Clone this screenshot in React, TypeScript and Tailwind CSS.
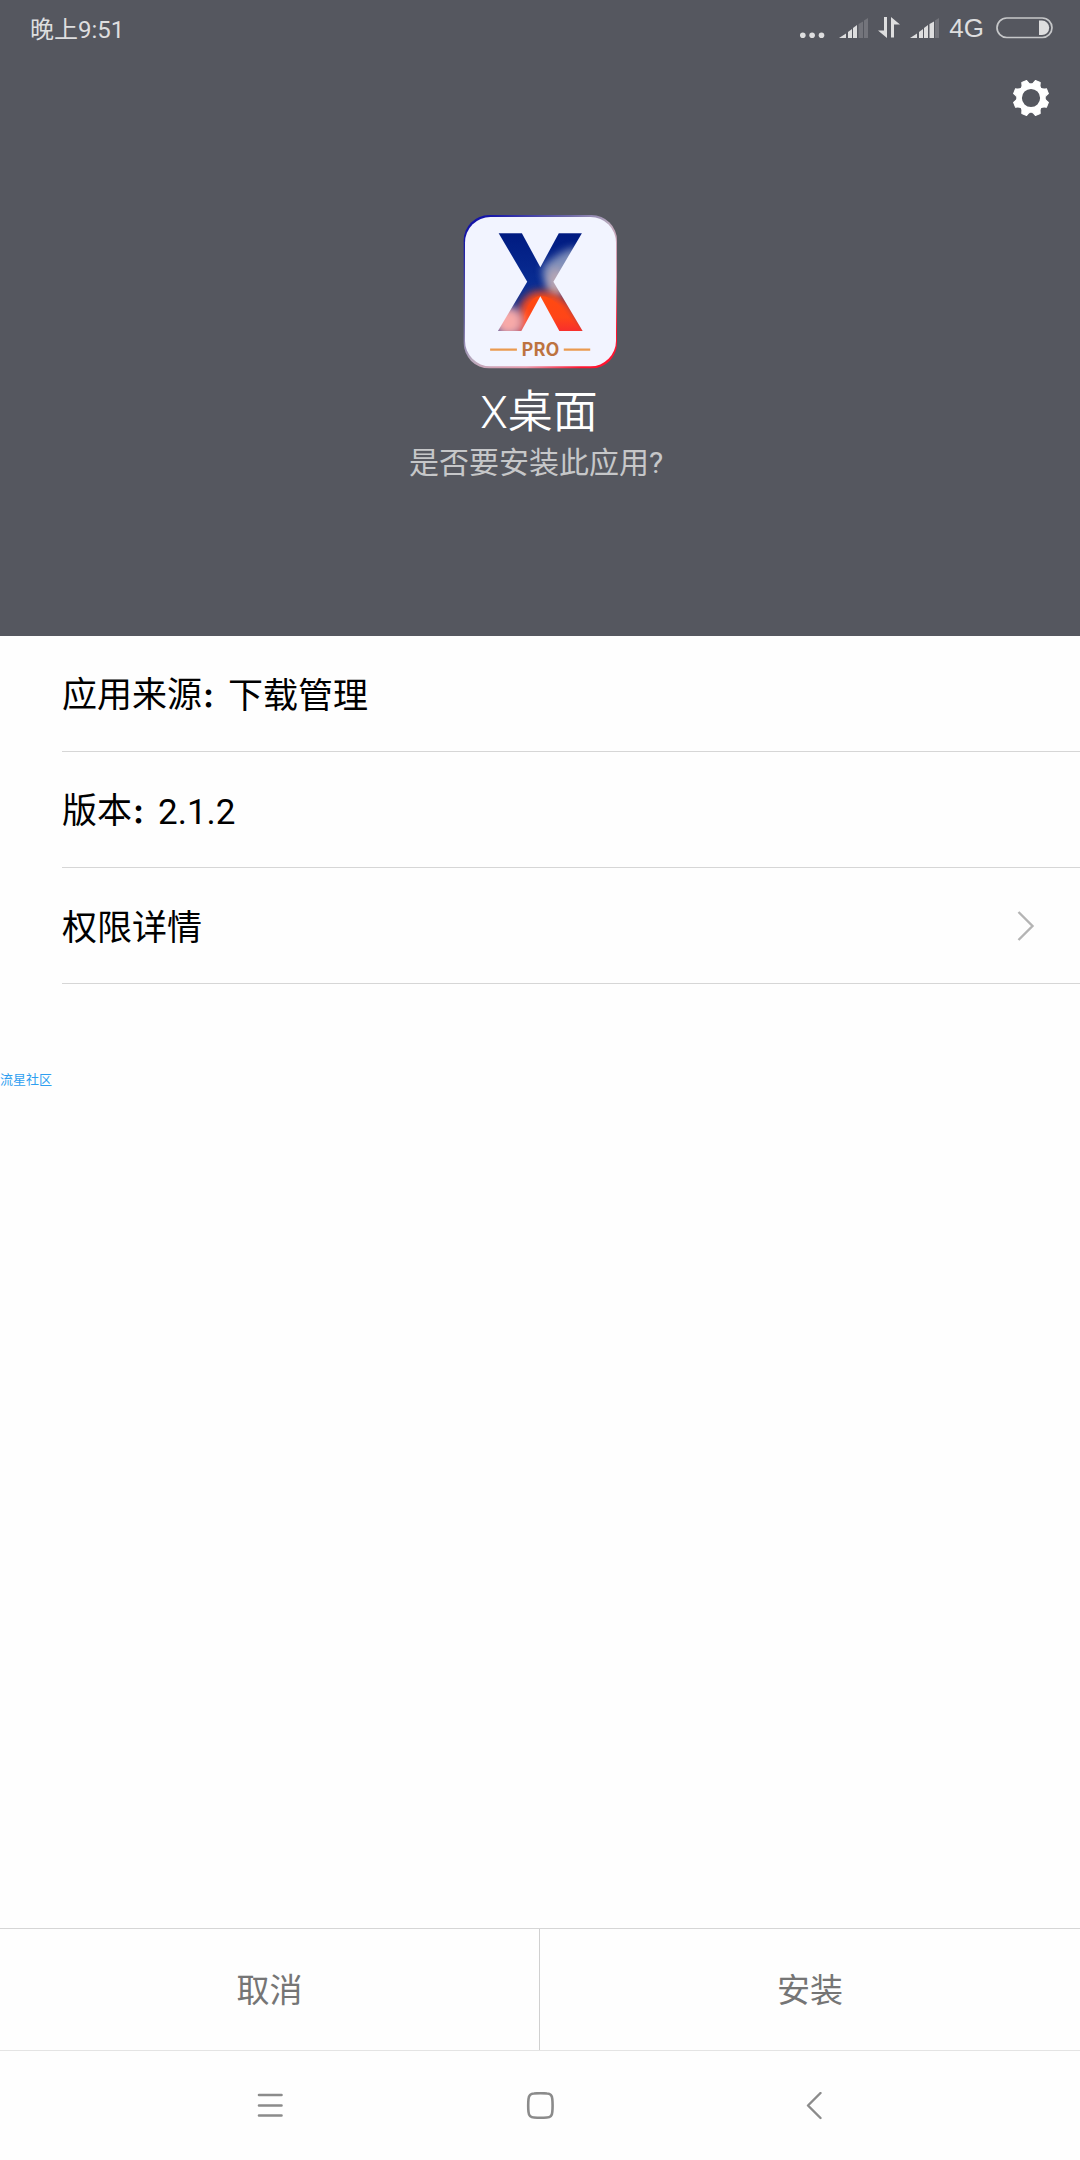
import React from "react";

interface InfoItem {
  id: number;
  label: string;
  value: string;
}

const infoItems: InfoItem[] = [
  { id: 1, label: "应用来源", value: "下载管理" },
  { id: 2, label: "版本", value: "2.1.2" },
];

const toothAngles = [22.5, 67.5, 112.5, 157.5, 202.5, 247.5, 292.5, 337.5];

const SignalIcon: React.FC<{ level: number }> = ({ level }) => {
  const bars = [
    "M0 20 L7 15.5 V20 Z",
    "M9 14 L13 11 V20 H9 Z",
    "M14 10 L18 7 V20 H14 Z",
    "M19.5 6 L24 3.5 V20 H19.5 Z",
    "M25 2.5 L29 0 V20 H25 Z",
  ];
  return (
    <svg className="h-5 w-[29px]" viewBox="0 0 29 20" fill="#dededf" aria-hidden="true">
      {bars.map((d, index) => (
        <path key={d} d={d} opacity={index < level ? 1 : 0.22} />
      ))}
    </svg>
  );
};

const StatusBar: React.FC = () => (
  <div className="flex h-[58px] items-center justify-between pl-[30px] pr-[27px] text-[#dededf]">
    <span className="pt-0.5 text-2xl">晚上9:51</span>
    <div className="flex h-full items-center pb-0.5">
      <svg className="mr-3.5 h-5 w-[26px]" viewBox="0 0 26 20" fill="currentColor" aria-hidden="true">
        <circle cx="3.8" cy="17.2" r="2.8" />
        <circle cx="13.1" cy="17.2" r="2.8" />
        <circle cx="22.5" cy="17.2" r="2.8" />
      </svg>
      <SignalIcon level={3} />
      <svg className="ml-2.5 mr-2.5 h-[22px] w-[22px]" viewBox="0 0 22 22" fill="currentColor" aria-hidden="true">
        <path d="M6 0 H9 V21 L0 13.5 H6 Z" />
        <path d="M13 0 L22 7.5 H16 V20.5 H13 Z" />
      </svg>
      <SignalIcon level={4} />
      <span className="ml-2.5 mr-3 font-['Liberation_Sans',sans-serif] text-[26px] leading-8">4G</span>
      <svg className="h-[22px] w-[57px]" viewBox="0 0 57 22" aria-hidden="true">
        <rect x="1" y="1" width="55" height="19.5" rx="9.75" fill="none" stroke="#c6c7c9" strokeWidth="1.7" />
        <path d="M43 3.6 H46 A7.2 7.2 0 0 1 46 18 H43 Z" fill="#dededf" />
      </svg>
    </div>
  </div>
);

const GearIcon: React.FC = () => (
  <svg className="h-[38px] w-[38px]" viewBox="-19 -19 38 38" aria-hidden="true">
    <circle r="11.7" fill="none" stroke="#fff" strokeWidth="5.2" />
    {toothAngles.map((angle) => (
      <path
        key={angle}
        d="M-5.4 -12.6 Q-3.2 -14.4 -2.6 -17.8 H2.6 Q3.2 -14.4 5.4 -12.6 Z"
        transform={`rotate(${angle})`}
        fill="#fff"
        stroke="#fff"
        strokeLinejoin="round"
      />
    ))}
  </svg>
);

const AppIcon: React.FC = () => (
  <svg className="h-[154px] w-[154px]" viewBox="68 48 460 460" role="img" aria-label="X桌面 PRO">
    <defs>
      <linearGradient id="edge" x1="0" y1="0" x2="1" y2="1">
        <stop offset="0.08" stopColor="#1414a8" />
        <stop offset="0.35" stopColor="#6f6aa8" />
        <stop offset="0.5" stopColor="#b9aabd" />
        <stop offset="0.7" stopColor="#e89aac" />
        <stop offset="0.88" stopColor="#ff1430" />
      </linearGradient>
      <linearGradient id="blue" x1="0" y1="0" x2="0" y2="1">
        <stop offset="0" stopColor="#001a80" />
        <stop offset="0.6" stopColor="#0a3096" />
      </linearGradient>
      <linearGradient id="red" x1="0" y1="0" x2="0" y2="1">
        <stop offset="0" stopColor="#ff4a10" />
        <stop offset="0.5" stopColor="#ff4518" />
        <stop offset="1" stopColor="#f3203a" />
      </linearGradient>
      <filter id="soft" x="-50%" y="-50%" width="200%" height="200%">
        <feGaussianBlur stdDeviation="12" />
      </filter>
      <clipPath id="mark">
        <text x="299" y="396" textAnchor="middle" fontFamily="Roboto, sans-serif" fontWeight="700" fontSize="412">
          X
        </text>
      </clipPath>
    </defs>
    <rect x="70" y="48" width="458" height="458" rx="76" fill="url(#edge)" />
    <rect x="74" y="54" width="451" height="446" rx="76" fill="#f2f4ff" />
    <g clipPath="url(#mark)">
      <rect x="160" y="95" width="280" height="310" fill="url(#blue)" />
      <path d="M305 205 Q340 165 400 145 L420 170 L350 290 L310 240 Z" fill="#8f9cc0" opacity="0.9" filter="url(#soft)" />
      <ellipse cx="345" cy="250" rx="26" ry="44" fill="#b8a6b4" filter="url(#soft)" />
      <path d="M225 440 L240 315 Q265 276 299 276 Q350 276 385 310 L480 440 Z" fill="url(#red)" filter="url(#soft)" />
      <path d="M250 350 Q270 290 299 290 Q335 290 365 330 L440 420 H255 Z" fill="url(#red)" />
      <circle cx="205" cy="366" r="44" fill="#f7a9a8" filter="url(#soft)" />
    </g>
    <path d="M149 450 H229 M369 450 H448" stroke="#ea9a50" strokeWidth="7" />
    <text
      x="299"
      y="470"
      textAnchor="middle"
      fontFamily="'Noto Sans CJK SC', sans-serif"
      fontWeight="700"
      fontSize="54"
      fill="#bd7340"
    >
      PRO
    </text>
  </svg>
);

const NavBar: React.FC = () => (
  <nav className="grid h-[110px] grid-cols-3 border-t border-[#e4e4e4] px-[12.5%]">
    <button type="button" aria-label="菜单" className="flex items-center justify-center">
      <svg className="h-7 w-7" viewBox="0 0 28 28" stroke="#8b8b8b" strokeWidth="2.6" strokeLinecap="round" aria-hidden="true">
        <path d="M3 3 H25.5 M3 13.5 H25.5 M3 23.5 H25.5" />
      </svg>
    </button>
    <button type="button" aria-label="主屏幕" className="flex items-center justify-center">
      <svg className="h-7 w-7" viewBox="0 0 28 28" fill="none" stroke="#8b8b8b" strokeWidth="2.6" aria-hidden="true">
        <path d="M8 1.5 Q14.5 0.9 21 1.5 Q26 1.5 26.3 7 Q26.9 13.5 26.3 20 Q26 25.5 21 25.5 Q14.5 26.1 8 25.5 Q3 25.5 2.5 20 Q1.9 13.5 2.5 7 Q3 1.5 8 1.5 Z" />
      </svg>
    </button>
    <button type="button" aria-label="返回" className="flex items-center justify-center">
      <svg className="h-7 w-7" viewBox="0 0 28 28" fill="none" stroke="#8b8b8b" strokeWidth="2.4" strokeLinecap="round" strokeLinejoin="round" aria-hidden="true">
        <path d="M24.5 1 L12 13.5 L24.5 26" />
      </svg>
    </button>
  </nav>
);

const App: React.FC = () => {
  return (
    <div className="flex min-h-screen flex-col bg-[#fefefe] font-[Roboto,'Noto_Sans_CJK_SC',sans-serif]">
      <header className="bg-[#55575f] pb-[152px]">
        <StatusBar />
        <div className="flex h-20 items-center justify-end pr-[30px]">
          <button type="button" aria-label="设置">
            <GearIcon />
          </button>
        </div>
        <div className="flex flex-col items-center pt-[77px]">
          <AppIcon />
          <h1 className="mt-3.5 pr-0.5 text-[45px] font-[350] leading-[60px] text-white">X桌面</h1>
          <p className="pr-2 text-[30px] leading-10 text-[#c6c7c9]">是否要安装此应用?</p>
        </div>
        <div className="h-px" />
      </header>

      <main className="grow">
        <div className="pl-[62px] text-[35px] leading-[52px] text-black">
          <dl>
            {infoItems.map((item) => (
              <div key={item.id} className="flex h-[116px] items-center border-b border-[#d6d6d6] pt-1.5">
                <dt>
                  {item.label}
                  <span className="text-[26px] font-black">：</span>
                </dt>
                <dd>{item.value}</dd>
              </div>
            ))}
          </dl>
          <button
            type="button"
            className="flex h-[116px] w-full items-center justify-between border-b border-[#d6d6d6] pr-[45px]"
          >
            <span className="pt-1.5">权限详情</span>
            <svg className="h-8 w-[18px]" viewBox="0 0 18 32" fill="none" stroke="#b4b4b4" strokeWidth="2.4" aria-hidden="true">
              <path d="M1.5 2 L15.5 16 L1.5 30" />
            </svg>
          </button>
        </div>
        <p className="mt-[86px] text-[13px] leading-5 text-[#2f9ff0]">流星社区</p>
      </main>

      <div className="grid h-[122px] grid-cols-2 border-t border-[#d6d6d6] text-[33px] text-[#757575]">
        <button type="button" className="border-r border-[#d0d0d0] pt-0.5">
          取消
        </button>
        <button type="button" className="pt-0.5">
          安装
        </button>
      </div>
      <NavBar />
    </div>
  );
};

export default App;
